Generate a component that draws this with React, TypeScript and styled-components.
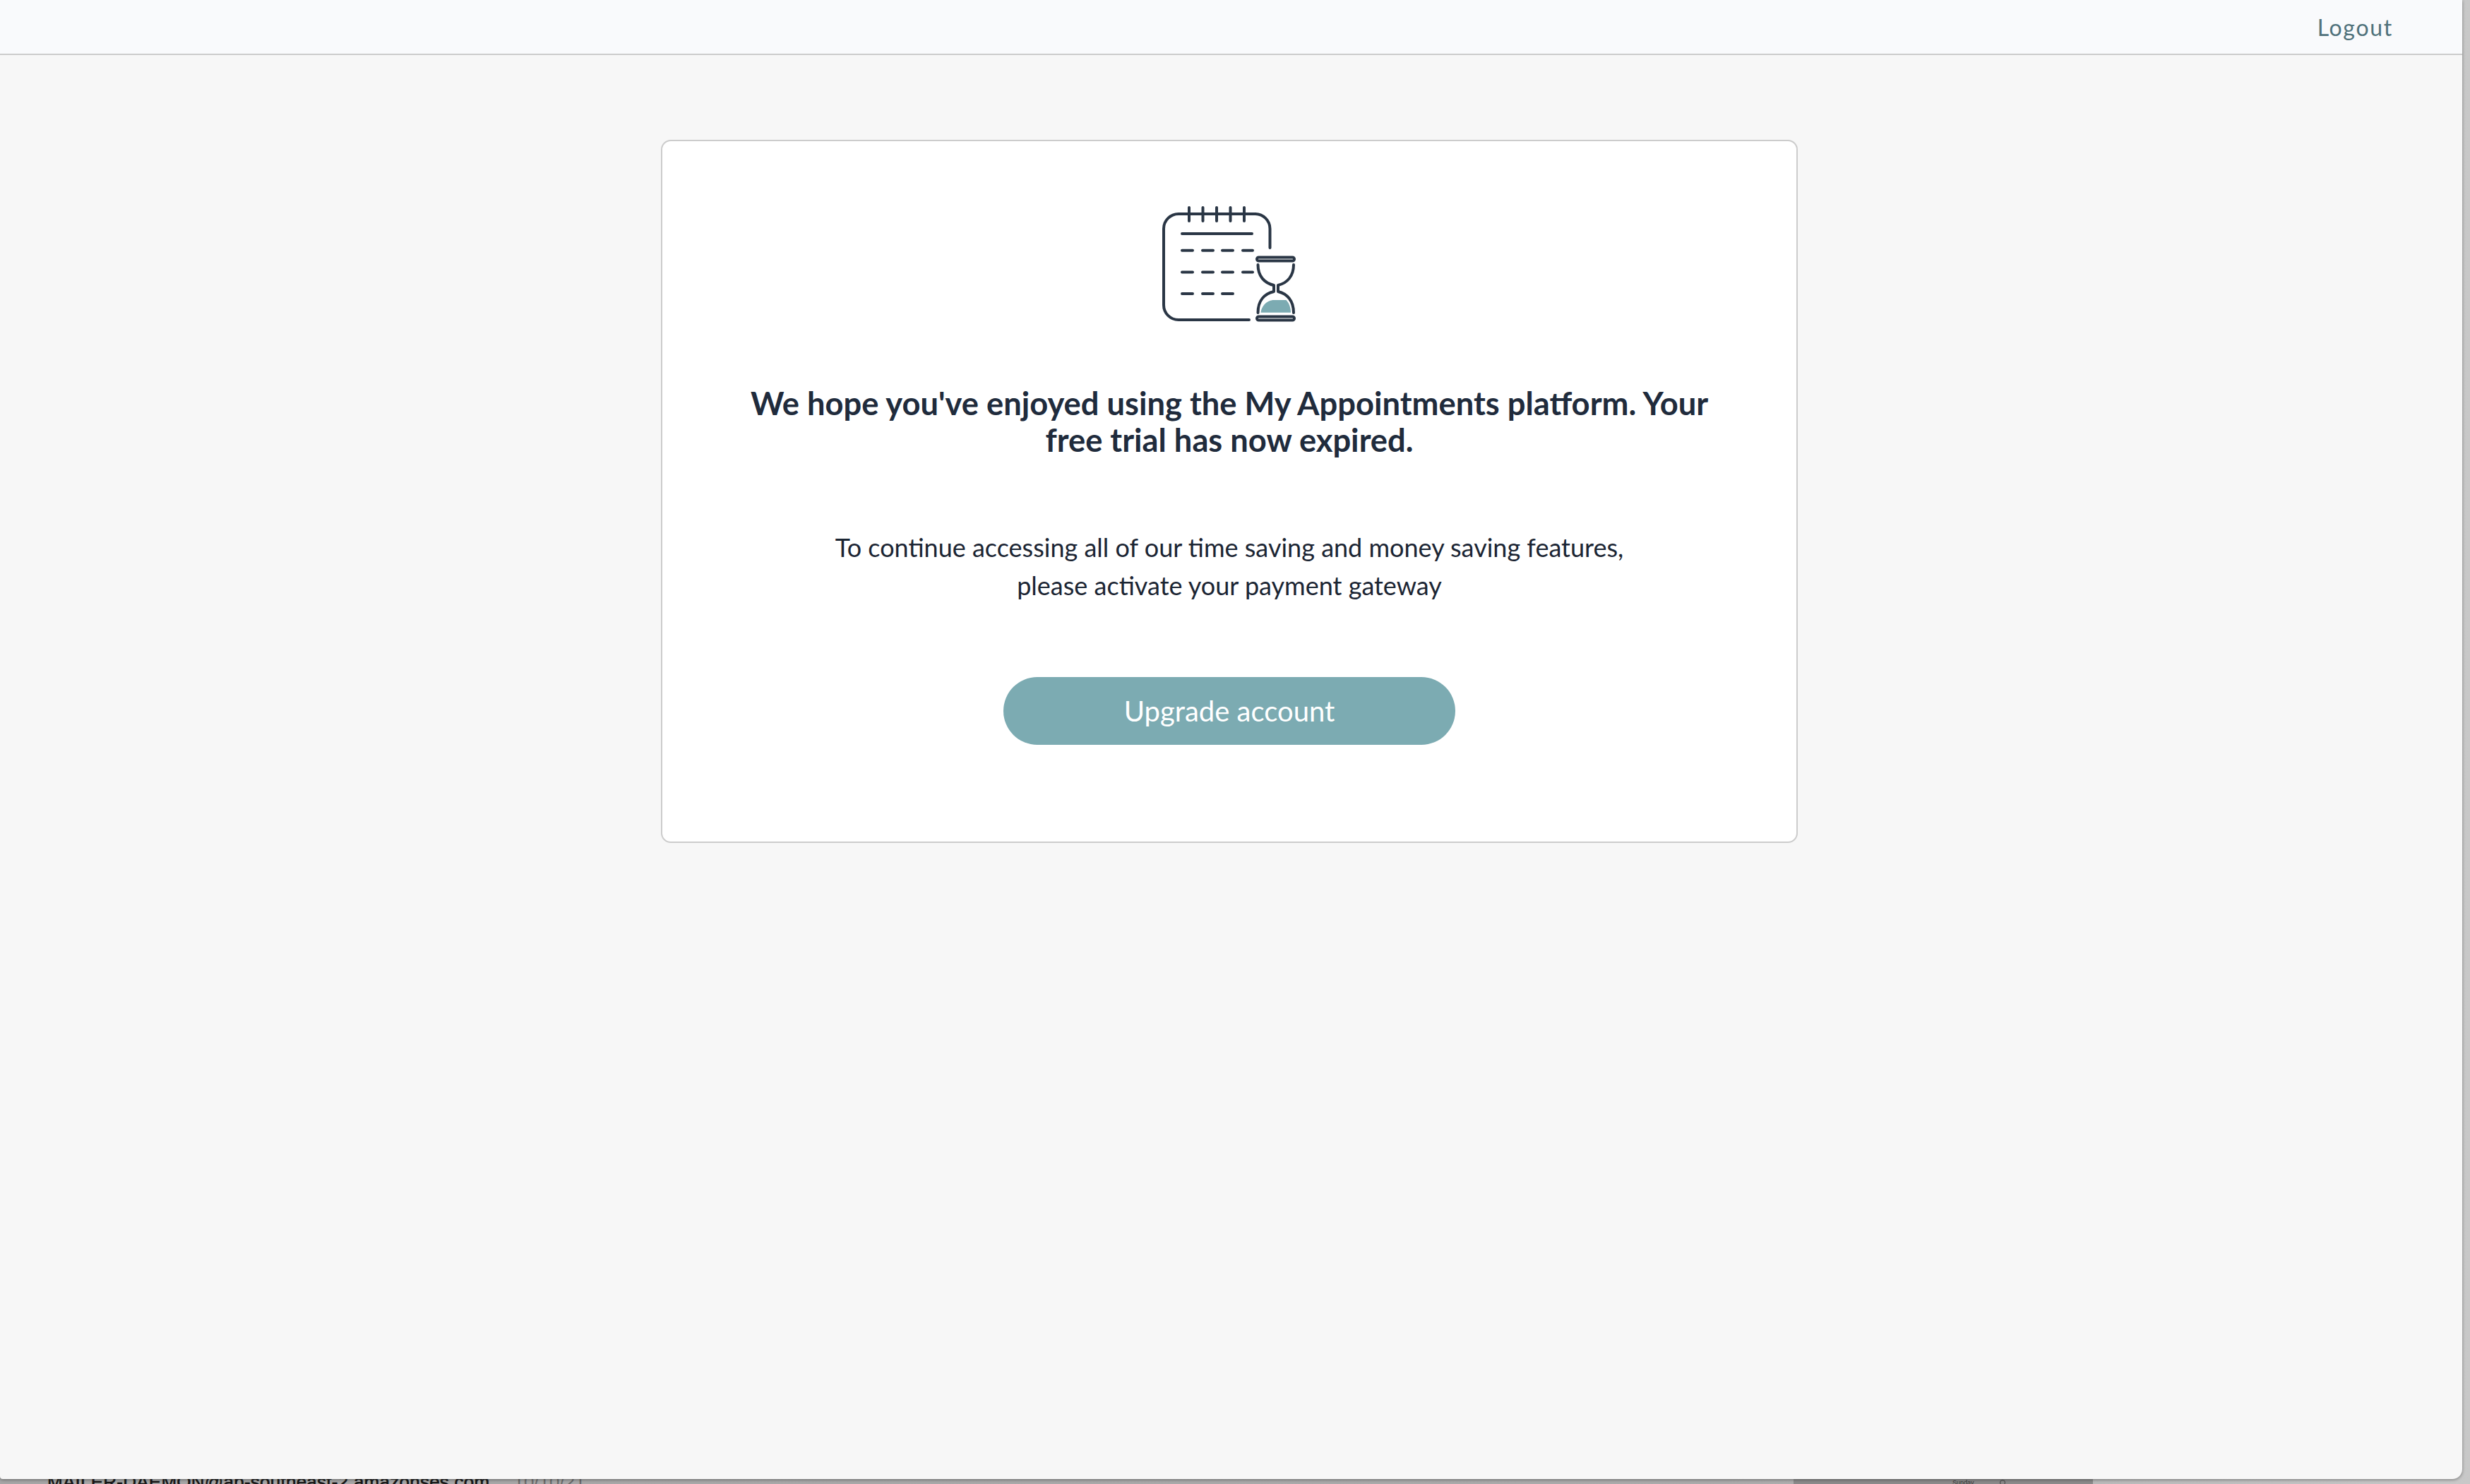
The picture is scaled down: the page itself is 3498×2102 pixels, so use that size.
import React from 'react'
import styled, { createGlobalStyle } from 'styled-components'

const GlobalStyle = createGlobalStyle`
	html, body {
		margin: 0;
		padding: 0;
		height: 100%;
		overflow: hidden;
	}
	body {
		font-family: "Lato", "Open Sans", sans-serif;
		background: #b4b4b4;
	}
`

const Desktop = styled.div`
	position: relative;
	width: 3498px;
	height: 2102px;
	overflow: hidden;
	background: linear-gradient(90deg, #a6a6a6 0%, #ababab 70%, #c8c8c8 100%);
`

// the mail list of the window behind, only a few rows of pixels of it show
const Behind = styled.div`
	display: grid;
	grid-template-columns: 2540px 424px 1fr;
	height: 2102px;
`

const BehindMail = styled.div`
	display: flex;
	align-items: flex-end;
	gap: 34px;
	padding-left: 67px;
`

const BehindPanel = styled.div`
	display: flex;
	align-items: flex-end;
	gap: 36px;
	padding-left: 225px;
	background: #8a8a8a;
`

const BehindSender = styled.span`
	font: 26px/1 "Liberation Sans", sans-serif;
	letter-spacing: 0.25px;
	color: #161616;
	-webkit-text-stroke: 0.6px #161616;
	margin-bottom: -10px;
`

const BehindDate = styled.span`
	font: 26px/1 "Liberation Sans", sans-serif;
	color: #6c6c6c;
	margin-bottom: -10px;
`

const BehindDay = styled.span`
	font: 9px/1 "Liberation Sans", sans-serif;
	color: #333;
	margin-bottom: -3px;
`

const BehindDot = styled.span`
	width: 8px;
	height: 8px;
	box-sizing: border-box;
	border: 1px solid #444;
	border-radius: 50%;
	margin-bottom: -2px;
`

const Window = styled.div`
	position: absolute;
	top: 0;
	left: 0;
	width: 3487px;
	height: 2095px;
	display: flex;
	flex-direction: column;
	background: #f7f7f7;
	border-radius: 0 0 14px 4px;
	overflow: hidden;
	box-shadow: 0 1px 4px rgba(0, 0, 0, 0.4);
`

const Header = styled.header`
	display: flex;
	justify-content: flex-end;
	align-items: center;
	flex: none;
	height: 78px;
	box-sizing: border-box;
	padding-right: 98px;
	background: #f9fafc;
	border-bottom: 2px solid #cccccc;
`

const LogoutLink = styled.a`
	font-size: 32px;
	letter-spacing: 1.7px;
	color: #50727b;
`

const Main = styled.main`
	display: flex;
	justify-content: center;
	padding: 120px 5px 0 0;
`

const Card = styled.section`
	display: flex;
	flex-direction: column;
	align-items: center;
	width: 1610px;
	height: 996px;
	box-sizing: border-box;
	padding-top: 70px;
	background: #ffffff;
	border: 2px solid #cccccc;
	border-radius: 14px;
`

const Illustration = styled.svg`
	display: block;
	flex: none;
	width: 300px;
	height: 200px;
	margin-bottom: 75px;
`

const Title = styled.h1`
	width: 1400px;
	margin: 0;
	font-size: 45.300px;
	line-height: 52px;
	font-weight: 700;
	text-align: center;
	color: #202b3c;
`

const Message = styled.p`
	margin: 99px 0 0;
	font-size: 36px;
	line-height: 54px;
	text-align: center;
	color: #1b2533;
`

const UpgradeButton = styled.button`
	width: 640px;
	height: 96px;
	margin-top: 103px;
	border: none;
	border-radius: 48px;
	background: #7cabb2;
	color: #ffffff;
	font-family: inherit;
	font-size: 40px;
`

const CalendarHourglass = () => (
	<Illustration viewBox="-9 0 300 200" fill="none" stroke="#2a3645" strokeWidth="4" strokeLinecap="round" strokeLinejoin="round">
		<path d="M198.500 81V54a21 21 0 0 0-21-21H69a21 21 0 0 0-21 21v108a21 21 0 0 0 21 21h100" />
		<path d="M84 24v19M103.500 24v19M123 24v19M142.500 24v19M162 24v19" />
		<path d="M74 61h99" />
		<path d="M74 84.700h15M103 84.700h15M131 84.700h15M160 84.700h14" />
		<path d="M74 115.500h15M103 115.500h15M131 115.500h15M160 115.500h14" />
		<path d="M74 146h15M103 146h15M131 146h15" />
		<rect x="180" y="94.500" width="53" height="5" rx="2.500" />
		<rect x="180" y="178.500" width="53" height="5" rx="2.500" />
		<path d="M181.500 105c0 16 9 26 22.500 29v9c-13.500 3-22.500 13-22.500 30M232 105c0 16-9 26-22 29v9c13 3 22 13 22 30" />
		<path d="M185.500 172.700c.5-8 8-17 17-17.700h19c4 4 6.500 11 6.500 17.700z" fill="#7cabb2" stroke="none" />
	</Illustration>
)

export default function App() {
	return (
		<>
			<GlobalStyle />
			<Desktop>
				<Behind>
					<BehindMail>
						<BehindSender>MAILER-DAEMON@ap-southeast-2.amazonses.com</BehindSender>
						<BehindDate>10/10/21</BehindDate>
					</BehindMail>
					<BehindPanel>
						<BehindDay>Sunday</BehindDay>
						<BehindDot />
					</BehindPanel>
				</Behind>
				<Window>
					<Header>
						<LogoutLink>Logout</LogoutLink>
					</Header>
					<Main>
						<Card>
							<CalendarHourglass />
							<Title>We hope you've enjoyed using the My Appointments platform. Your free trial has now expired.</Title>
							<Message>
								To continue accessing all of our time saving and money saving features,
								<br />
								please activate your payment gateway
							</Message>
							<UpgradeButton>Upgrade account</UpgradeButton>
						</Card>
					</Main>
				</Window>
			</Desktop>
		</>
	)
}
